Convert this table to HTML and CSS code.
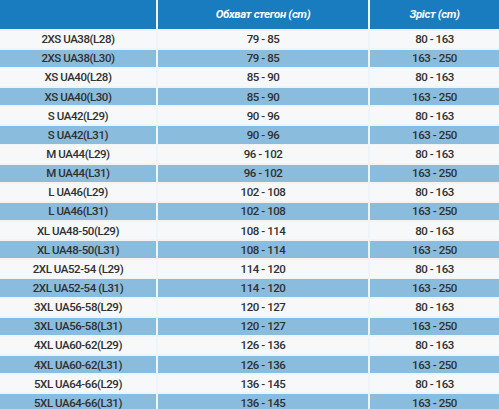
FILE: index.html
```html
<!DOCTYPE html>
<html lang="uk">
<head>
<meta charset="utf-8">
<title>Розмірна сітка</title>
<link rel="stylesheet" href="styles.css">
</head>
<body>
<div class="sizes">
  <div class="row head"><div class="cell"></div><div class="cell">Обхват стегон (cm)</div><div class="cell">Зріст (cm)</div></div>
  <div class="row"><div class="cell">2XS UA38(L28)</div><div class="cell">79 - 85</div><div class="cell">80 - 163</div></div>
  <div class="row alt"><div class="cell">2XS UA38(L30)</div><div class="cell">79 - 85</div><div class="cell">163 - 250</div></div>
  <div class="row"><div class="cell">XS UA40(L28)</div><div class="cell">85 - 90</div><div class="cell">80 - 163</div></div>
  <div class="row alt"><div class="cell">XS UA40(L30)</div><div class="cell">85 - 90</div><div class="cell">163 - 250</div></div>
  <div class="row"><div class="cell">S UA42(L29)</div><div class="cell">90 - 96</div><div class="cell">80 - 163</div></div>
  <div class="row alt"><div class="cell">S UA42(L31)</div><div class="cell">90 - 96</div><div class="cell">163 - 250</div></div>
  <div class="row"><div class="cell">M UA44(L29)</div><div class="cell">96 - 102</div><div class="cell">80 - 163</div></div>
  <div class="row alt"><div class="cell">M UA44(L31)</div><div class="cell">96 - 102</div><div class="cell">163 - 250</div></div>
  <div class="row"><div class="cell">L UA46(L29)</div><div class="cell">102 - 108</div><div class="cell">80 - 163</div></div>
  <div class="row alt"><div class="cell">L UA46(L31)</div><div class="cell">102 - 108</div><div class="cell">163 - 250</div></div>
  <div class="row"><div class="cell">XL UA48-50(L29)</div><div class="cell">108 - 114</div><div class="cell">80 - 163</div></div>
  <div class="row alt"><div class="cell">XL UA48-50(L31)</div><div class="cell">108 - 114</div><div class="cell">163 - 250</div></div>
  <div class="row"><div class="cell">2XL UA52-54 (L29)</div><div class="cell">114 - 120</div><div class="cell">80 - 163</div></div>
  <div class="row alt"><div class="cell">2XL UA52-54 (L31)</div><div class="cell">114 - 120</div><div class="cell">163 - 250</div></div>
  <div class="row"><div class="cell">3XL UA56-58(L29)</div><div class="cell">120 - 127</div><div class="cell">80 - 163</div></div>
  <div class="row alt"><div class="cell">3XL UA56-58(L31)</div><div class="cell">120 - 127</div><div class="cell">163 - 250</div></div>
  <div class="row"><div class="cell">4XL UA60-62(L29)</div><div class="cell">126 - 136</div><div class="cell">80 - 163</div></div>
  <div class="row alt"><div class="cell">4XL UA60-62(L31)</div><div class="cell">126 - 136</div><div class="cell">163 - 250</div></div>
  <div class="row"><div class="cell">5XL UA64-66(L29)</div><div class="cell">136 - 145</div><div class="cell">80 - 163</div></div>
  <div class="row alt"><div class="cell">5XL UA64-66(L31)</div><div class="cell">136 - 145</div><div class="cell">163 - 250</div></div>
</div>
</body>
</html>
```

FILE: styles.css
```css
html, body {
  margin: 0;
  padding: 0;
  background: #f6f8fa;
  overflow: hidden;
}

.sizes {
  display: grid;
  grid-template-columns: 156px 210px 1fr;
  grid-template-rows: 28.7px;
  grid-auto-rows: 17.3px;
  column-gap: 2px;
  row-gap: 1.85px;
  background: #eef4f8;
  font-family: Roboto, "Noto Sans", sans-serif;
  font-weight: 500;
  font-size: 11.5px;
  letter-spacing: -0.45px;
  color: #303030;
}

.row {
  display: contents;
}

.cell {
  display: flex;
  align-items: center;
  justify-content: center;
  background: #f6f8fa;
  white-space: nowrap;
}

.alt .cell {
  background: #8abddd;
}

.head .cell {
  background: #187cbf;
  color: #ffffff;
  font-weight: 700;
  font-style: italic;
  letter-spacing: -0.35px;
}
```
